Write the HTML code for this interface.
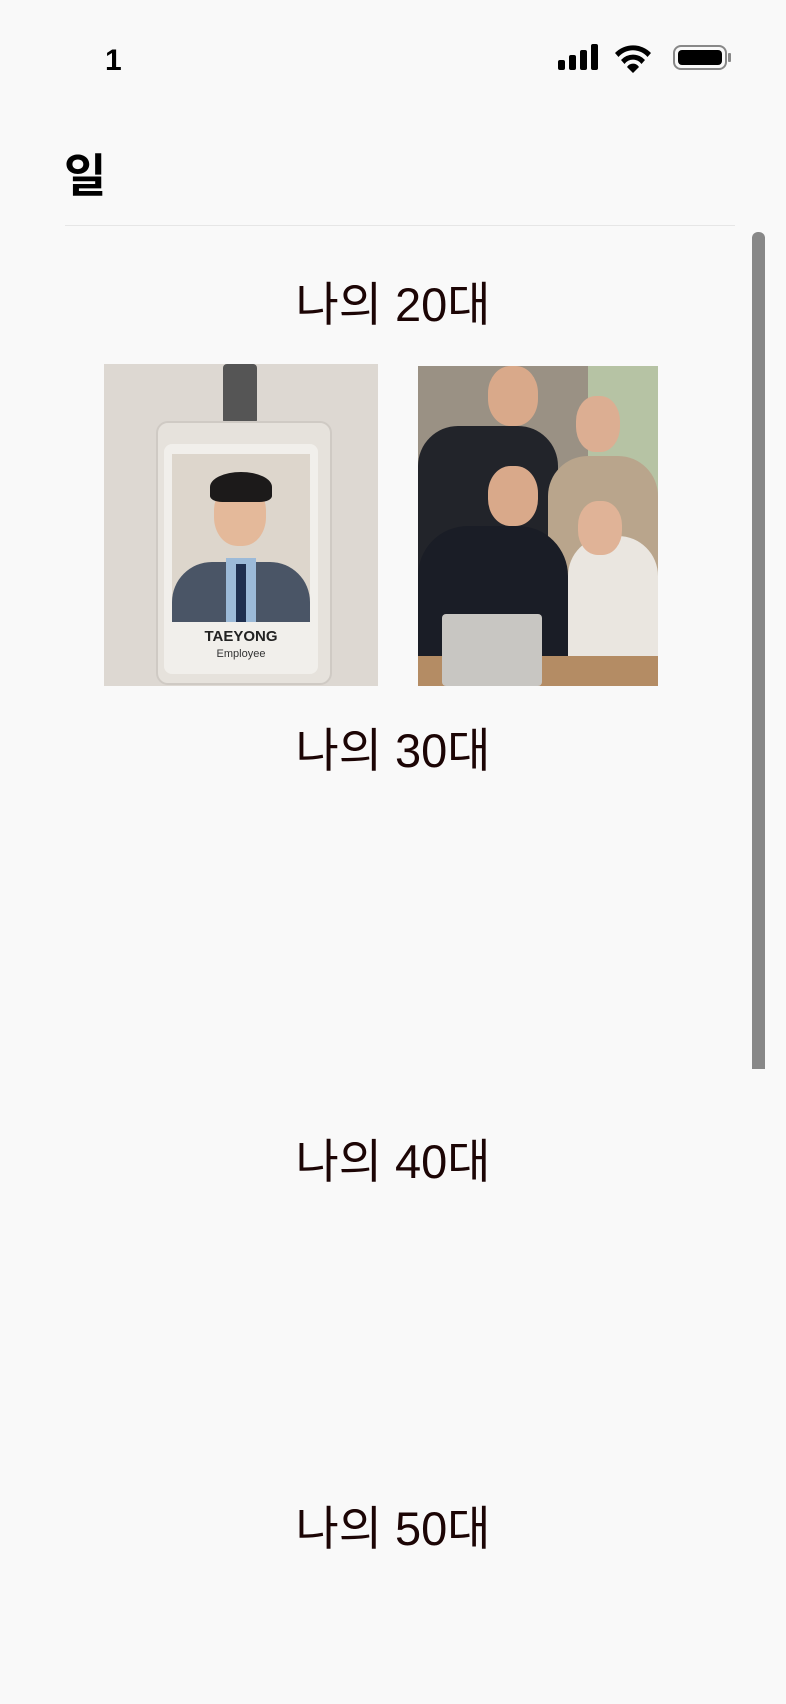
<!DOCTYPE html>
<html><head><meta charset="utf-8"><style>
html,body{margin:0;padding:0;background:#f9f9f9;width:786px;height:1704px;overflow:hidden;position:relative;font-family:"Liberation Sans","Noto Sans CJK KR",sans-serif}
.a{position:absolute}
.h{position:absolute;left:0;width:786px;text-align:center;font-size:47px;color:#1c0505;line-height:1}
</style></head><body>
<div class="a" style="left:105px;top:44px;font-size:30px;font-weight:600;color:#000">1</div>
<svg class="a" style="left:556px;top:42px" width="180" height="32" viewBox="0 0 180 32">
<rect x="2" y="18" width="7" height="10" rx="2"/><rect x="13" y="13" width="7" height="15" rx="2"/><rect x="24" y="8" width="7" height="20" rx="2"/><rect x="35" y="2" width="7" height="26" rx="2"/>
<path d="M59 11 a25 25 0 0 1 36 0 l-3.5 4 a19 19 0 0 0 -29 0z M65 18 a16 16 0 0 1 24 0 l-3.5 4 a10.5 10.5 0 0 0 -17 0z M71 25 a7 7 0 0 1 12 0 l-6 6z"/>
<rect x="118" y="4" width="52" height="23" rx="7" fill="none" stroke="#888" stroke-width="2"/>
<rect x="122" y="8" width="44" height="15" rx="4"/><rect x="172" y="11" width="3" height="9" rx="1" fill="#888"/>
</svg>
<div class="a" style="left:64px;top:140px;font-size:46px;font-weight:700;color:#000">일</div>
<div class="a" style="left:65px;top:225px;width:670px;height:1px;background:#e6e6e6"></div>
<div class="a" style="left:752px;top:232px;width:13px;height:837px;background:#888;border-radius:6px 6px 0 0"></div>
<div class="h" style="top:281px">나의 20대</div>
<div class="a" style="left:104px;top:364px;width:274px;height:322px;background:#ddd8d2">
 <div class="a" style="left:119px;top:0;width:34px;height:60px;background:#555;border-radius:4px"></div>
 <div class="a" style="left:52px;top:57px;width:172px;height:260px;background:#e6e2dc;border:2px solid #cfcac4;border-radius:12px"></div>
 <div class="a" style="left:60px;top:80px;width:154px;height:230px;background:#f1efeb;border-radius:8px"></div>
 <div class="a" style="left:68px;top:90px;width:138px;height:168px;background:#ddd6cc;overflow:hidden">
  <div class="a" style="left:42px;top:28px;width:52px;height:64px;background:#e4b99a;border-radius:45%"></div>
  <div class="a" style="left:38px;top:18px;width:62px;height:30px;background:#1c1a1a;border-radius:50% 50% 20% 20%"></div>
  <div class="a" style="left:0;top:108px;width:138px;height:70px;background:#4a5566;border-radius:40px 40px 0 0"></div>
  <div class="a" style="left:54px;top:104px;width:30px;height:64px;background:#9cbad8"></div>
  <div class="a" style="left:64px;top:110px;width:10px;height:58px;background:#1f2f4f"></div>
 </div>
 <div class="a" style="left:60px;top:264px;width:154px;text-align:center;font-size:15px;font-weight:700;color:#222">TAEYONG</div>
 <div class="a" style="left:60px;top:284px;width:154px;text-align:center;font-size:11px;color:#333">Employee</div>
</div>
<div class="a" style="left:418px;top:366px;width:240px;height:320px;background:#9a9184;overflow:hidden">
 <div class="a" style="left:170px;top:0;width:70px;height:200px;background:#b6c3a4"></div>
 <div class="a" style="left:0;top:60px;width:140px;height:200px;background:#22242a;border-radius:40px 40px 0 0"></div>
 <div class="a" style="left:130px;top:90px;width:110px;height:150px;background:#b9a58c;border-radius:40px 40px 0 0"></div>
 <div class="a" style="left:0;top:160px;width:150px;height:160px;background:#1a1d26;border-radius:50px 50px 0 0"></div>
 <div class="a" style="left:150px;top:170px;width:90px;height:150px;background:#eae6e0;border-radius:40px 40px 0 0"></div>
 <div class="a" style="left:70px;top:0;width:50px;height:60px;background:#d9a98a;border-radius:45%"></div>
 <div class="a" style="left:158px;top:30px;width:44px;height:56px;background:#dcae92;border-radius:45%"></div>
 <div class="a" style="left:70px;top:100px;width:50px;height:60px;background:#d9a98a;border-radius:45%"></div>
 <div class="a" style="left:160px;top:135px;width:44px;height:54px;background:#e0b397;border-radius:45%"></div>
 <div class="a" style="left:0;top:290px;width:240px;height:30px;background:#b48c64"></div>
 <div class="a" style="left:24px;top:248px;width:100px;height:72px;background:#c8c6c2;border-radius:4px"></div>
</div>
<div class="h" style="top:727px">나의 30대</div>
<div class="h" style="top:1138px">나의 40대</div>
<div class="h" style="top:1505px">나의 50대</div>
</body></html>
